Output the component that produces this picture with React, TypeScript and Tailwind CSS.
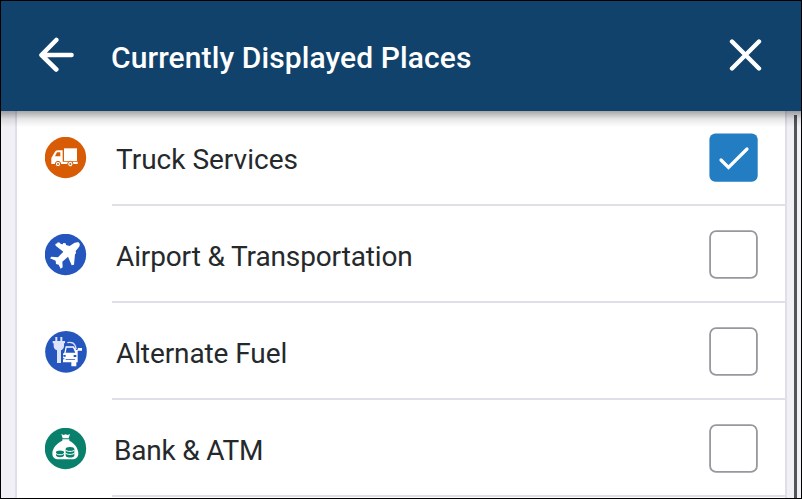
import type { ReactNode } from "react";

type Place = {
  name: string;
  icon: ReactNode;
  checked: boolean;
  labelClass: string;
};

const TruckIcon = () => (
  <svg className="size-[42px]" viewBox="45 36 126 126" fill="#fff">
    <circle cx="106.500" cy="97.500" r="62" fill="#d75c05" />
    <rect x="102" y="70" width="39" height="38" />
    <path fillRule="evenodd" d="M98 76v34h45v7H64V99l10-17c2-4 5-6 9-6zM81 82l-6 12h16V82z" />
    <circle cx="84" cy="117" r="8" stroke="#d75c05" strokeWidth="3" />
    <circle cx="84" cy="117" r="3" fill="#d75c05" />
    <circle cx="121" cy="117" r="8" stroke="#d75c05" strokeWidth="3" />
    <circle cx="121" cy="117" r="3" fill="#d75c05" />
  </svg>
);

const PlaneIcon = () => (
  <svg className="size-[42px]" viewBox="45 42 126 126" fill="#fff">
    <circle cx="106.500" cy="103.500" r="62" fill="#2456bd" />
    <path d="M148 68c-7-3-15 0-21 5l-8 5-11-3-1-5-7-1-2 4-6-1-2-4-7-1-1 3-6 2 1 5 23 18-16 17-20-2-4 5 17 7 1 10 8 2 6 12 6-4-1-17 17-15 11 26 7-2 3-31 3-3-1-7 5-6c7-7 10-14 5-19z" />
  </svg>
);

const ChargingIcon = () => (
  <svg className="size-[42px]" viewBox="45 39 126 126" fill="#fff">
    <circle cx="108" cy="101.500" r="62.500" fill="#2456bd" />
    <path fill="#dce5fa" d="M76 57h6v12h9V57h6v12h8v7h-3v8c0 7-4 11-9 13v38H81V97c-6-2-10-6-10-13v-8h-3v-7h8z" />
    <path d="M112 74c10-2 20 1 23 8 2 4 3 7 3 11" fill="none" stroke="#dce5fa" strokeWidth="4" />
    <path fillRule="evenodd" d="M107 85h24l8 11h3l2-6h12v8h-13v35h-4v12h-15v-12h-25v-9h4v-3h-4v-14l4-3zM110 89l-3 15h29l-7-15z" />
    <path fill="#2456bd" d="M100 111h7v5h-7zM131 111h8v6h-8zM107 124h28v2h-28z" />
  </svg>
);

const MoneyBagIcon = () => (
  <svg className="size-[42px]" viewBox="45 39 126 126" fill="#fff">
    <circle cx="106.500" cy="100.500" r="62" fill="#08806c" />
    <path d="M94 57l7 3 6-2 6 2 7-3-4 13H98z" />
    <path d="M97 73h21v4c15 7 27 23 27 38 0 12-7 18-19 18H86c-12 0-19-6-19-18 0-15 14-31 30-38z" />
    <g fill="#08806c">
      <path d="M78 112v9c0 8 24 8 24 0v-9z" />
      <ellipse cx="90" cy="112" rx="12" ry="5.500" />
      <path d="M107 102v20c0 7 26 7 26 0v-20z" />
      <ellipse cx="120" cy="102" rx="13" ry="6" />
    </g>
    <g fill="none" stroke="#fff" strokeWidth="3">
      <path d="M77 114c2 7 24 7 26 0M106 104c2 7 26 7 28 0M106 113c2 7 26 7 28 0" />
    </g>
  </svg>
);

const places: Place[] = [
  { name: "Truck Services", icon: <TruckIcon />, checked: true, labelClass: "pl-1" },
  { name: "Airport & Transportation", icon: <PlaneIcon />, checked: false, labelClass: "pl-1 tracking-[-0.13px]" },
  { name: "Alternate Fuel", icon: <ChargingIcon />, checked: false, labelClass: "pl-1 tracking-[-0.1px]" },
  { name: "Bank & ATM", icon: <MoneyBagIcon />, checked: false, labelClass: "pl-[2px] tracking-[-0.2px]" },
];

const Checkbox = ({ checked }: { checked: boolean }) => (
  <svg role="checkbox" aria-checked={checked} className="h-[49px] w-[49px]" viewBox="0 0 49 49" fill="none">
    {checked ? (
      <>
        <rect x="0.400" y="0.400" width="48.300" height="48.300" rx="6" fill="#237dc2" />
        <path d="M12 27l7.500 7.500L38 16" stroke="#fff" strokeWidth="3.200" strokeLinecap="round" />
      </>
    ) : (
      <rect x="1.100" y="1.100" width="46.800" height="46.800" rx="6" stroke="#98979f" strokeWidth="1.800" />
    )}
  </svg>
);

export default function App() {
  return (
    <div className="flex h-[499px] w-[802px] flex-col overflow-hidden border border-black bg-[#f1f0f6] font-['Roboto','Liberation_Sans',sans-serif]">
      <header className="flex h-[110px] shrink-0 items-center bg-[#10426b] pr-[38px] pl-[37px] text-white">
        <button aria-label="Back" className="mr-[35px] mb-[2px]">
          <svg className="h-[36px] w-[38px]" viewBox="0 0 38 36" fill="none" stroke="currentColor" strokeWidth="4.600" strokeLinecap="round" strokeLinejoin="round">
            <path d="M33.500 18H4M18.300 3L3.500 18l14.800 14.500" />
          </svg>
        </button>
        <h1 className="flex-1 pt-1 text-[30px] leading-9 font-medium tracking-[0.1px] whitespace-nowrap">Currently Displayed Places</h1>
        <button aria-label="Close" className="mb-[2px]">
          <svg className="size-[34px]" viewBox="0 0 34 34" fill="none" stroke="currentColor" strokeWidth="4.400" strokeLinecap="round">
            <path d="M3 3.500L30 30.500M30 3.500L3 30.500" />
          </svg>
        </button>
      </header>
      <div className="relative flex min-h-0 flex-1">
        <main className="ml-[14px] w-[772px] border-x-2 border-[#dfdee9] bg-white">
          {places.map((place) => (
            <div key={place.name} className="group flex h-[97px] first:h-[95px]">
              <div className="flex w-[95px] items-center pt-px pl-7 group-first:pt-0 group-first:pb-px">{place.icon}</div>
              <div className="flex flex-1 items-center justify-between border-b-2 border-[#dfdee9] pt-[2px] pr-[27px] group-first:pt-0">
                <span className={`pt-1 text-[28px] leading-9 whitespace-nowrap text-[#25292c] ${place.labelClass}`}>{place.name}</span>
                <Checkbox checked={place.checked} />
              </div>
            </div>
          ))}
        </main>
        <div className="mt-1 ml-[7px] w-[3px] bg-[#515458]" />
        <div className="pointer-events-none absolute inset-x-0 top-0 h-[16px] bg-linear-to-b from-black/35 via-black/10 to-transparent" />
      </div>
    </div>
  );
}
